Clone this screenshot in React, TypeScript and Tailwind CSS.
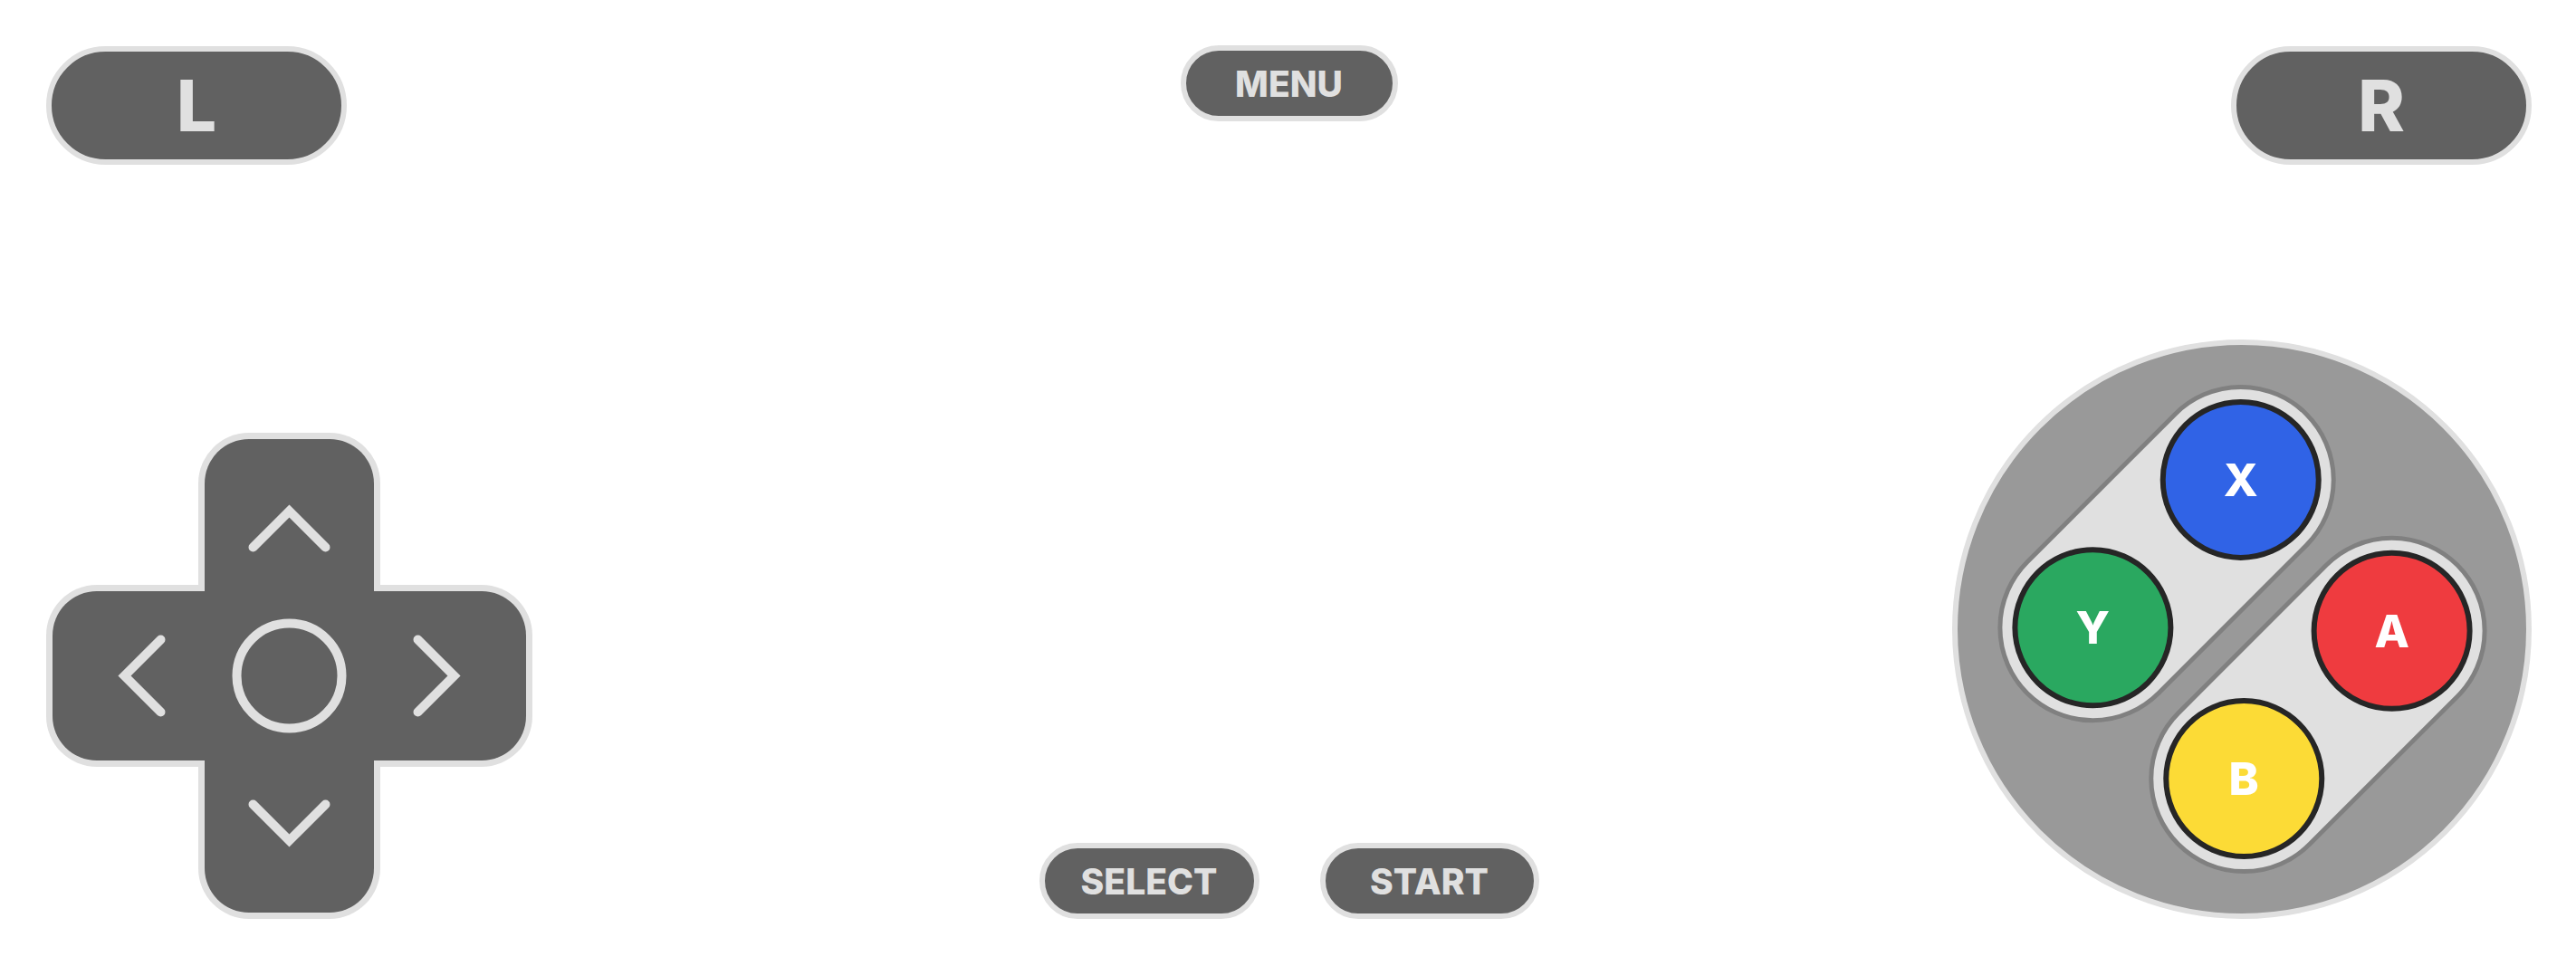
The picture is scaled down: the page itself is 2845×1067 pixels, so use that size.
const pillBtn =
  "flex h-[84px] items-center justify-center rounded-full border-[6px] border-[#e0e0e0] bg-[#616161] text-[39px] font-extrabold leading-none text-[#e0e0e0]";

function Shoulder({ label }: { label: string }) {
  return (
    <div className="flex h-[131px] w-[332px] items-center justify-center rounded-full border-[6px] border-[#e0e0e0] bg-[#616161] text-[78px] font-extrabold leading-none text-[#e0e0e0]">
      {label}
    </div>
  );
}

function DPad() {
  const c = 268.5;
  return (
    <div className="grid h-[537px] w-[537px] place-items-center">
      <div className="col-start-1 row-start-1 h-[537px] w-[201px] rounded-[56px] bg-[#e0e0e0]" />
      <div className="col-start-1 row-start-1 h-[201px] w-[537px] rounded-[56px] bg-[#e0e0e0]" />
      <div className="col-start-1 row-start-1 h-[523px] w-[187px] rounded-[49px] bg-[#616161]" />
      <div className="col-start-1 row-start-1 h-[187px] w-[523px] rounded-[49px] bg-[#616161]" />
      <svg
        className="col-start-1 row-start-1"
        width="537"
        height="537"
        viewBox="0 0 537 537"
        fill="none"
        stroke="#e0e0e0"
        strokeWidth="10"
        strokeLinecap="round"
      >
        <circle cx={c} cy={c} r="58" />
        <path d={`M${c - 40} ${c - 142} L${c} ${c - 182} L${c + 40} ${c - 142}`} />
        <path d={`M${c - 40} ${c + 142} L${c} ${c + 182} L${c + 40} ${c + 142}`} />
        <path d={`M${c - 142} ${c - 40} L${c - 182} ${c} L${c - 142} ${c + 40}`} />
        <path d={`M${c + 142} ${c - 40} L${c + 182} ${c} L${c + 142} ${c + 40}`} />
      </svg>
    </div>
  );
}

function FaceButton({ label, color }: { label: string; color: string }) {
  return (
    <div
      className={`flex h-[178px] w-[178px] items-center justify-center rounded-full border-[6px] border-[#262626] ${color}`}
    >
      <span className="rotate-45 text-[50px] font-extrabold leading-none text-white">{label}</span>
    </div>
  );
}

function FaceButtons() {
  return (
    <div className="flex h-[640px] w-[640px] items-center justify-center rounded-full border-[6px] border-[#e0e0e0] bg-[#999999]">
      <div className="flex -rotate-45 flex-col gap-[26px]">
        <div className="flex h-[210px] w-[441px] items-center justify-between rounded-full border-[5px] border-[#808080] bg-[#e0e0e0] px-[11px]">
          <FaceButton label="Y" color="bg-[#2aa860]" />
          <FaceButton label="X" color="bg-[#3063e6]" />
        </div>
        <div className="flex h-[210px] w-[441px] items-center justify-between rounded-full border-[5px] border-[#808080] bg-[#e0e0e0] px-[11px]">
          <FaceButton label="B" color="bg-[#fcdb36]" />
          <FaceButton label="A" color="bg-[#ef3b3f]" />
        </div>
      </div>
    </div>
  );
}

export default function App() {
  return (
    <div className="flex h-[1067px] w-full flex-col justify-between overflow-hidden bg-white font-['Inter',sans-serif]">
      <div className="flex items-start justify-between pl-[51px] pr-[49px] pt-[51px]">
        <Shoulder label="L" />
        <div className={`${pillBtn} w-[240px] -mt-px`}>MENU</div>
        <Shoulder label="R" />
      </div>
      <div className="grid grid-cols-[1fr_auto_1fr] items-end pl-[51px] pr-[49px] pb-[52px]">
        <div className="flex justify-start">
          <DPad />
        </div>
        <div className="flex gap-[67px]">
          <div className={`${pillBtn} w-[243px]`}>SELECT</div>
          <div className={`${pillBtn} w-[242px]`}>START</div>
        </div>
        <div className="flex justify-end">
          <FaceButtons />
        </div>
      </div>
    </div>
  );
}
